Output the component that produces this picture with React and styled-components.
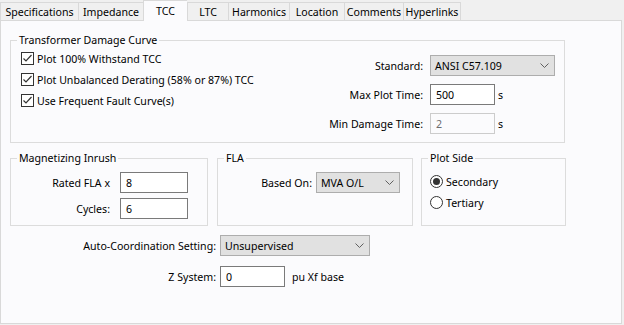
import styled, { createGlobalStyle } from "styled-components";

const GlobalStyle = createGlobalStyle`
  body {
    margin: 0;
    background: #f0f0f0;
    font-family: "Noto Sans", "Segoe UI", sans-serif;
    font-size: 10.6px;
    color: #000;
  }
`;

const Window = styled.div`
  width: 624px;
  height: 325px;
  display: flex;
  flex-direction: column;
`;

const TabBar = styled.div`
  display: flex;
  align-items: flex-end;
  height: 20px;
  position: relative;
  z-index: 1;
`;

const Tab = styled.div`
  box-sizing: border-box;
  width: ${(p) => p.$w}px;
  height: ${(p) => (p.$active ? 21 : 18)}px;
  margin-bottom: ${(p) => (p.$active ? -1 : 0)}px;
  display: flex;
  align-items: ${(p) => (p.$active ? "flex-start" : "center")};
  padding-top: ${(p) => (p.$active ? 2 : 0)}px;
  justify-content: center;
  border-top: 1px solid #d9d9d9;
  border-left: 1px solid #d9d9d9;
  background: ${(p) => (p.$active ? "#fbfbfd" : "#f0f0f0")};
  line-height: 16px;
  white-space: nowrap;

  &:last-child {
    border-right: 1px solid #d9d9d9;
  }
`;

const Panel = styled.div`
  box-sizing: border-box;
  width: 622px;
  height: 304px;
  border: 1px solid #d9d9d9;
  background: #fbfbfd;
  padding: 11px 9px 0 9px;
`;

const Group = styled.fieldset`
  box-sizing: border-box;
  margin: 0;
  padding: 0;
  min-width: 0;
  width: ${(p) => p.$w}px;
  height: ${(p) => p.$h}px;
  border: 1px solid #dcdcdc;
`;

const Legend = styled.legend`
  margin-left: 6px;
  padding: 0 2px;
  line-height: 16px;
`;

const DamageBody = styled.div`
  display: flex;
  justify-content: space-between;
  padding: 0 9px 0 10px;
`;

const CheckList = styled.div`
  display: flex;
  flex-direction: column;
`;

const OptionRow = styled.label`
  display: flex;
  align-items: center;
  gap: 3px;
  height: 21px;
  white-space: nowrap;
`;

const Box = styled.span`
  box-sizing: border-box;
  width: 13px;
  height: 13px;
  border: 1px solid #333;
  background: #fff;
  display: flex;
  align-items: center;
  justify-content: center;
`;

const Radio = styled.span`
  box-sizing: border-box;
  width: 13px;
  height: 13px;
  border-radius: 50%;
  border: 1px solid #333;
  background: #fff;
  display: flex;
  align-items: center;
  justify-content: center;

  &::after {
    content: "";
    display: ${(p) => (p.$on ? "block" : "none")};
    width: 7px;
    height: 7px;
    border-radius: 50%;
    background: #333;
  }
`;

const FormGrid = styled.div`
  display: grid;
  grid-template-columns: ${(p) => p.$cols};
  grid-auto-rows: 21px;
  column-gap: ${(p) => p.$gap ?? 7}px;
  row-gap: ${(p) => p.$rowGap ?? 8}px;
  padding-top: ${(p) => p.$top ?? 0}px;
  align-items: center;
`;

const Label = styled.span`
  justify-self: end;
  white-space: nowrap;
`;

const Field = styled.div`
  display: flex;
  align-items: center;
  gap: ${(p) => p.$gap ?? 3}px;
  height: 21px;
`;

const TextInput = styled.input`
  box-sizing: border-box;
  width: ${(p) => p.$w}px;
  height: 21px;
  margin: 0;
  padding: 0 5px;
  font: inherit;
  color: ${(p) => (p.disabled ? "#6d6d6d" : "#000")};
  background: ${(p) => (p.disabled ? "#fbfbfd" : "#fff")};
  border: 1px solid ${(p) => (p.disabled ? "#cccccc" : "#7a7a7a")};
  outline: none;
`;

const Select = styled.div`
  box-sizing: border-box;
  width: ${(p) => p.$w}px;
  height: 21px;
  display: flex;
  align-items: center;
  justify-content: space-between;
  padding: 0 5px 0 4px;
  background: #e1e1e1;
  border: 1px solid #adadad;
  white-space: nowrap;
`;

const GroupRow = styled.div`
  display: flex;
  margin-top: 7px;
`;

const RadioList = styled.div`
  display: flex;
  flex-direction: column;
  padding: 5px 0 0 8px;
`;

const Chevron = () => (
  <svg width="9" height="5" viewBox="0 0 9 5">
    <polyline points="0.5,0.5 4.5,4.5 8.5,0.5" fill="none" stroke="#606060" strokeWidth="1" />
  </svg>
);

const Check = ({ label }) => (
  <OptionRow>
    <Box>
      <svg width="11" height="11" viewBox="0 0 11 11">
        <polyline points="1.5,5.5 4,8 9.5,2" fill="none" stroke="#333" strokeWidth="1.2" />
      </svg>
    </Box>
    {label}
  </OptionRow>
);

const Dropdown = ({ w, value }) => (
  <Select $w={w}>
    <span>{value}</span>
    <Chevron />
  </Select>
);

const tabs = [
  ["Specifications", 78],
  ["Impedance", 65],
  ["TCC", 44],
  ["LTC", 41],
  ["Harmonics", 61],
  ["Location", 55],
  ["Comments", 59],
  ["Hyperlinks", 58],
];

export default function App() {
  return (
    <>
      <GlobalStyle />
      <Window>
        <TabBar>
          {tabs.map(([name, w]) => (
            <Tab key={name} $w={w} $active={name === "TCC"}>
              {name}
            </Tab>
          ))}
        </TabBar>
        <Panel>
          <Group $w={555} $h={111}>
            <Legend>Transformer Damage Curve</Legend>
            <DamageBody>
              <CheckList>
                <Check label="Plot 100% Withstand TCC" />
                <Check label="Plot Unbalanced Derating (58% or 87%) TCC" />
                <Check label="Use Frequent Fault Curve(s)" />
              </CheckList>
              <FormGrid $cols="auto 125px" $top={7}>
                <Label>Standard:</Label>
                <Dropdown w={125} value="ANSI C57.109" />
                <Label>Max Plot Time:</Label>
                <Field>
                  <TextInput $w={65} defaultValue="500" />s
                </Field>
                <Label>Min Damage Time:</Label>
                <Field>
                  <TextInput $w={65} defaultValue="2" disabled />s
                </Field>
              </FormGrid>
            </DamageBody>
          </Group>

          <GroupRow>
            <Group $w={198} $h={76}>
              <Legend>Magnetizing Inrush</Legend>
              <FormGrid $cols="99px 68px" $gap={10} $rowGap={5} $top={6}>
                <Label>Rated FLA x</Label>
                <TextInput $w={68} defaultValue="8" />
                <Label>Cycles:</Label>
                <TextInput $w={68} defaultValue="6" />
              </FormGrid>
            </Group>
            <Group $w={196} $h={76} style={{ marginLeft: 9 }}>
              <Legend>FLA</Legend>
              <FormGrid $cols="94px 84px" $gap={4} $top={6}>
                <Label>Based On:</Label>
                <Dropdown w={84} value="MVA O/L" />
              </FormGrid>
            </Group>
            <Group $w={145} $h={76} style={{ marginLeft: 8 }}>
              <Legend>Plot Side</Legend>
              <RadioList>
                <OptionRow>
                  <Radio $on />
                  Secondary
                </OptionRow>
                <OptionRow>
                  <Radio />
                  Tertiary
                </OptionRow>
              </RadioList>
            </Group>
          </GroupRow>

          <FormGrid $cols="206px auto" $gap={4} $rowGap={10} $top={9}>
            <Label>Auto-Coordination Setting:</Label>
            <Dropdown w={150} value="Unsupervised" />
            <Label>Z System:</Label>
            <Field $gap={7}>
              <TextInput $w={65} defaultValue="0" />
              pu Xf base
            </Field>
          </FormGrid>
        </Panel>
      </Window>
    </>
  );
}
